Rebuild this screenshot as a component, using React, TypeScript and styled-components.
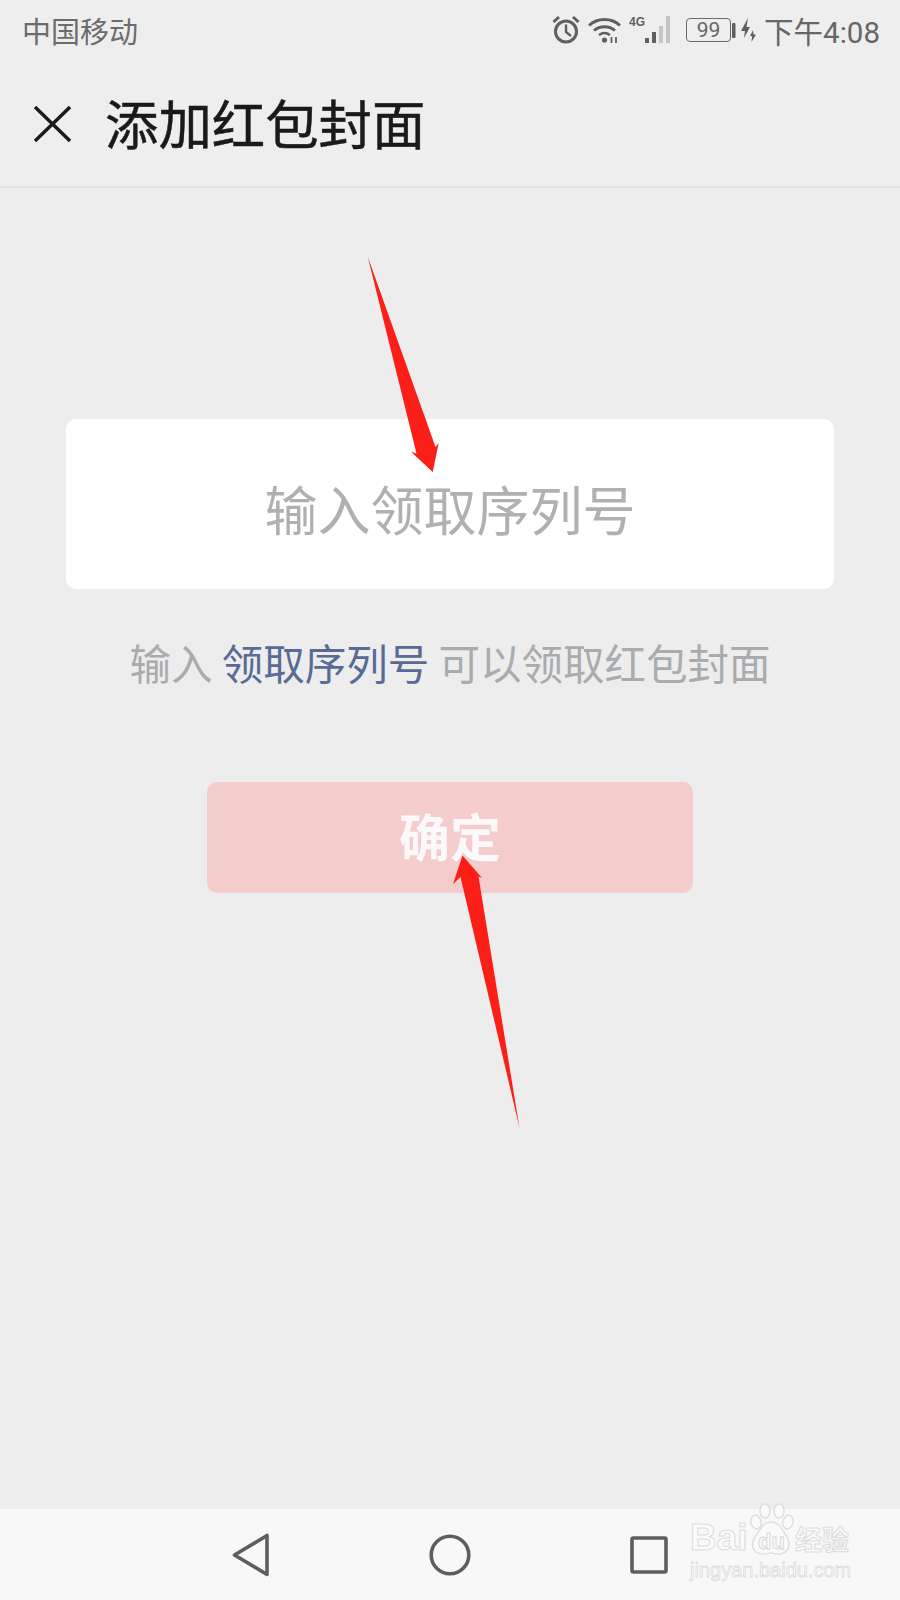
import styled, { createGlobalStyle } from "styled-components";

const cjk = `"Noto Sans CJK SC", "Noto Sans", sans-serif`;

const GlobalStyle = createGlobalStyle`
  html, body {
    margin: 0;
    padding: 0;
    background: #ededed;
  }
  * {
    box-sizing: border-box;
  }
`;

export default function App() {
  return (
    <Page>
      <GlobalStyle />
      <StatusBar>
        <Carrier>中国移动</Carrier>
        <StatusIcons>
          <AlarmWrap>
            <AlarmIcon />
          </AlarmWrap>
          <WifiIcon />
          <SignalIcon />
          <BatteryBox>99</BatteryBox>
          <BatteryCharge />
          <Clock>下午4:08</Clock>
        </StatusIcons>
      </StatusBar>
      <Header>
        <CloseIcon />
        <Title>添加红包封面</Title>
      </Header>
      <Content>
        <InputCard>输入领取序列号</InputCard>
        <Hint>
          输入 <HintLink>领取序列号</HintLink> 可以领取红包封面
        </Hint>
        <ConfirmButton>确定</ConfirmButton>
      </Content>
      <NavBar>
        <NavIcons />
      </NavBar>
      <Watermark>
        <WatermarkTop>
          <WatermarkBai>Bai</WatermarkBai>
          <PawWrap>
            <PawIcon />
            <PawLabel>du</PawLabel>
          </PawWrap>
          <WatermarkCn>经验</WatermarkCn>
        </WatermarkTop>
        <WatermarkUrl>jingyan.baidu.com</WatermarkUrl>
      </Watermark>
      <ArrowLayer viewBox="0 0 900 1600">
        <polygon points="367.7,256.5 435.5,447 438.7,443 432.7,472 411,451.7 416.5,453.5" />
        <polygon points="519.5,1128 478.5,876.5 482,878 462.5,855.5 453,884 460.5,877" />
      </ArrowLayer>
    </Page>
  );
}

function AlarmIcon() {
  return (
    <svg width="28" height="29" viewBox="0 0 28 29" fill="none" stroke="#5f5f5f">
      <circle cx="14" cy="16.5" r="10.5" strokeWidth="3" />
      <path d="M14 9.5v7.5l5 4" strokeWidth="2.4" />
      <path d="M1.5 7 7 2M26.5 7 21 2" strokeWidth="3" />
    </svg>
  );
}

function WifiIcon() {
  return (
    <svg width="33" height="26" viewBox="0 0 33 26" fill="none" stroke="#5f5f5f">
      <path d="M1 8.5C9.5 .5 23.5 .5 32 8.5" strokeWidth="2.8" />
      <path d="M6 13.5c6-5 15-5 21 0" strokeWidth="2.8" />
      <path d="M11 18c3.500-2.500 7.500-2.500 11 0" strokeWidth="2.6" />
      <circle cx="16.500" cy="23" r="2.600" fill="#5f5f5f" stroke="none" />
      <path d="M23.500 20v6M28 20v6" strokeWidth="1.800" />
    </svg>
  );
}

function SignalIcon() {
  return (
    <SignalWrap>
      <NetworkLabel>4G</NetworkLabel>
      <svg width="30" height="28" viewBox="0 0 30 28">
        <rect x="1" y="22" width="4" height="5" fill="#5f5f5f" />
        <rect x="8" y="16" width="4" height="11" fill="#5f5f5f" />
        <rect x="15" y="10" width="4" height="17" fill="#c4c4c4" />
        <rect x="22" y="0" width="4" height="27" fill="#c4c4c4" />
      </svg>
    </SignalWrap>
  );
}

function BatteryCharge() {
  return (
    <svg width="25" height="26" viewBox="0 0 25 26" fill="#5f5f5f">
      <rect x="0" y="6" width="3.500" height="15" rx="1" />
      <polygon points="16,1 9,14 13,14 12,21 18,10 14.500,10" />
      <polygon points="21,13 18,19 20,19 19.500,25 24,17.500 21.500,17.500" />
    </svg>
  );
}

function CloseIcon() {
  return (
    <svg width="38" height="38" viewBox="0 0 38 38" stroke="#1a1a1a" strokeWidth="3.400">
      <path d="M2 2l35 34M37 2 2 36" />
    </svg>
  );
}

function NavIcons() {
  return (
    <NavRow>
      <svg width="38" height="44" viewBox="0 0 38 44" fill="none" stroke="#5e5e5e" strokeWidth="3.600" strokeLinejoin="round">
        <path d="M35 2.500v39L2.500 22z" />
      </svg>
      <svg width="42" height="42" viewBox="0 0 42 42" fill="none" stroke="#5e5e5e" strokeWidth="3.600">
        <circle cx="21" cy="21" r="18.800" />
      </svg>
      <svg width="38" height="38" viewBox="0 0 38 38" fill="none" stroke="#5e5e5e" strokeWidth="3.600" strokeLinejoin="round">
        <rect x="2" y="2" width="34" height="34" rx="1.500" />
      </svg>
    </NavRow>
  );
}

function PawIcon() {
  return (
    <svg width="48" height="54" viewBox="0 0 48 54" fill="#fafafa" stroke="#dedede" strokeWidth="1.500">
      <ellipse cx="9" cy="19" rx="5" ry="7" transform="rotate(-15 9 19)" />
      <ellipse cx="18" cy="8" rx="5" ry="7" />
      <ellipse cx="32" cy="8" rx="5" ry="7" />
      <ellipse cx="41" cy="19" rx="5" ry="7" transform="rotate(15 41 19)" />
      <path d="M24 19c9 0 11 8 16 15 5 9 0 17-9 17-3 0-5-1-7-1s-4 1-8 1C6 51 3 42 8 34c5-6 7-15 16-15z" />
    </svg>
  );
}

const Page = styled.div`
  position: relative;
  width: 900px;
  height: 1600px;
  display: flex;
  flex-direction: column;
  overflow: hidden;
  background: #ededed;
  font-family: ${cjk};
`;

const StatusBar = styled.div`
  height: 62px;
  padding: 0 20px 3px 22px;
  display: flex;
  align-items: center;
  justify-content: space-between;
  background: #eeeeee;
`;

const Carrier = styled.div`
  font-size: 29px;
  color: #6c6c6c;
`;

const StatusIcons = styled.div`
  display: flex;
  align-items: center;
`;

const AlarmWrap = styled.div`
  display: flex;
  margin-right: 8px;
`;

const SignalWrap = styled.div`
  display: flex;
  align-items: flex-end;
  margin-left: 8px;
`;

const NetworkLabel = styled.div`
  align-self: flex-start;
  width: 15px;
  margin-top: -1px;
  font-family: "Liberation Sans", sans-serif;
  font-size: 12px;
  font-weight: 700;
  line-height: 14px;
  color: #5f5f5f;
`;

const BatteryBox = styled.div`
  width: 45px;
  height: 24px;
  margin-left: 12px;
  margin-right: 1px;
  border: 1.500px solid #6a6a6a;
  border-radius: 4px;
  display: flex;
  align-items: center;
  justify-content: center;
  font-family: "Roboto", sans-serif;
  font-size: 21px;
  color: #666666;
`;

const Clock = styled.div`
  margin-left: 7px;
  font-family: "Roboto", ${cjk};
  font-size: 29.500px;
  color: #666666;
`;

const Header = styled.div`
  height: 126px;
  padding: 0 0 0 33px;
  display: flex;
  align-items: center;
  gap: 34px;
  border-bottom: 2px solid #e2e2e2;
  background: #eeeeee;
`;

const Title = styled.h1`
  margin: -4px 0 0;
  font-size: 53.400px;
  font-weight: 400;
  line-height: 1;
  color: #1a1a1a;
  -webkit-text-stroke: 0.500px #1a1a1a;
`;

const Content = styled.div`
  flex: 1;
  padding-top: 231px;
  display: flex;
  flex-direction: column;
  align-items: center;
`;

const InputCard = styled.div`
  width: 768px;
  height: 170px;
  padding-top: 8px;
  border-radius: 10px;
  background: #ffffff;
  display: flex;
  align-items: center;
  justify-content: center;
  font-size: 53px;
  color: #b0b0b0;
`;

const Hint = styled.div`
  margin-top: 44px;
  font-size: 41.500px;
  line-height: 58px;
  color: #a9abad;
`;

const HintLink = styled.span`
  color: #576b95;
`;

const ConfirmButton = styled.div`
  width: 486px;
  height: 111px;
  margin-top: 91px;
  padding-bottom: 6px;
  border-radius: 10px;
  background: #f4cccc;
  display: flex;
  align-items: center;
  justify-content: center;
  font-size: 51px;
  font-weight: 700;
  color: #fbf9f9;
`;

const NavBar = styled.div`
  height: 91px;
  background: #f8f8f8;
  display: flex;
  align-items: center;
  padding-top: 1px;
`;

const NavRow = styled.div`
  margin-left: 232px;
  display: flex;
  align-items: center;
  gap: 159px;
`;

const Watermark = styled.div`
  position: absolute;
  left: 690px;
  top: 1503px;
  width: 165px;
  color: #fafafa;
`;

const WatermarkTop = styled.div`
  display: flex;
  align-items: flex-end;
`;

const WatermarkBai = styled.div`
  width: 57px;
  font-family: "Liberation Sans", sans-serif;
  font-size: 37px;
  font-weight: 700;
  line-height: 38px;
  -webkit-text-stroke: 1px #dcdcdc;
`;

const PawWrap = styled.div`
  position: relative;
  width: 48px;
  height: 54px;
`;

const PawLabel = styled.div`
  position: absolute;
  left: 11px;
  bottom: 3px;
  font-family: "Liberation Sans", sans-serif;
  font-size: 22px;
  font-weight: 700;
  line-height: 24px;
  -webkit-text-stroke: 0.800px #d4d4d4;
`;

const WatermarkCn = styled.div`
  font-size: 27px;
  font-weight: 700;
  line-height: 36px;
  -webkit-text-stroke: 1px #dcdcdc;
`;

const WatermarkUrl = styled.div`
  margin-top: 1px;
  font-family: "Liberation Sans", sans-serif;
  font-size: 20px;
  line-height: 24px;
  white-space: nowrap;
  -webkit-text-stroke: 0.800px #dcdcdc;
`;

const ArrowLayer = styled.svg`
  position: absolute;
  inset: 0;
  width: 900px;
  height: 1600px;
  pointer-events: none;
  fill: #fb1f18;
`;
